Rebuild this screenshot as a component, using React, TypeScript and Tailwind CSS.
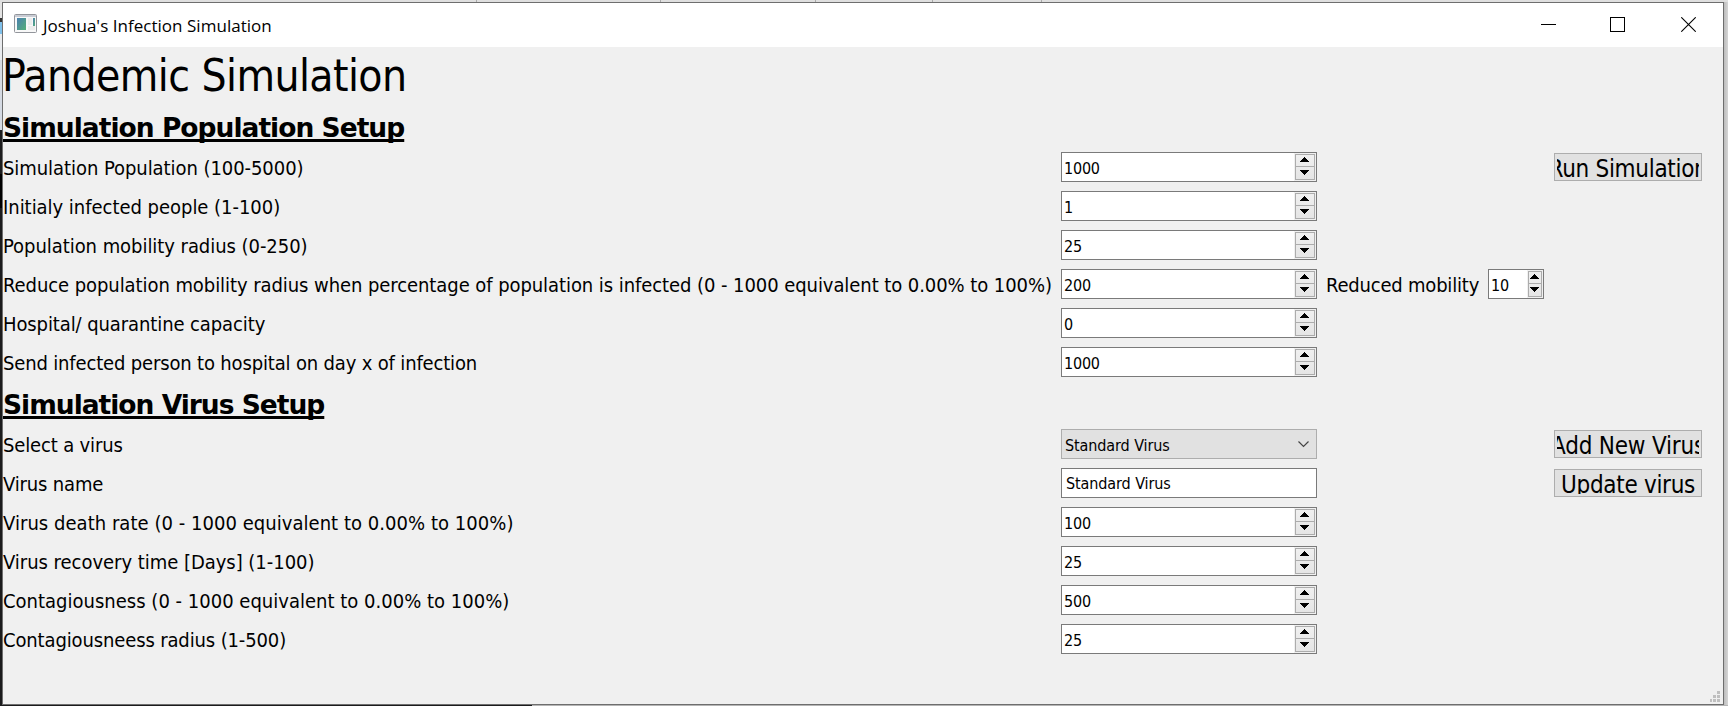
import type { ReactNode } from "react";

const tahoma = "font-['DejaVu_Sans_Condensed','DejaVu_Sans',sans-serif]";

function Arrow({ down = false }: { down?: boolean }) {
  return (
    <svg width="9" height="5" viewBox="0 0 9 5" shapeRendering="crispEdges" className="block shrink-0">
      {down ? (
        <path d="M0 0h9v1H8v1H7v1H6v1H5v1H4V4H3V3H2V2H1V1H0z" fill="#000" />
      ) : (
        <path d="M4 0h1v1h1v1h1v1h1v1h1v1H0V4h1V3h1V2h1V1h1z" fill="#000" />
      )}
    </svg>
  );
}

function SpinBox({ value, small = false }: { value: string; small?: boolean }) {
  return (
    <div
      className={`flex h-[30px] shrink-0 justify-between border border-[#7a7a7a] bg-white ${small ? "w-14" : "w-64"}`}
    >
      <span className="pt-[6px] pl-[2px] text-[16px] leading-[19px] tracking-[-0.2px]">{value}</span>
      <div className={`flex bg-[#f0f0f0] py-px pl-px ${small ? "w-4" : "w-[22px]"}`}>
        <div
          className={`flex h-[26px] flex-col border border-[#acacac] bg-linear-to-b from-[#f0f0f0] to-[#e5e5e5] ${small ? "w-[14px]" : "w-5"}`}
        >
          <div className="flex h-3 items-start justify-center border-b border-[#acacac] pt-[2px] pr-px">
            <Arrow />
          </div>
          <div className="flex flex-1 items-start justify-center pt-[3px] pr-px">
            <Arrow down />
          </div>
        </div>
      </div>
    </div>
  );
}

function Button({ children, className }: { children: ReactNode; className: string }) {
  return (
    <button type="button" className="mt-px ml-auto h-7 w-[148px] shrink-0 border border-[#adadad] bg-[#e1e1e1] p-[2px]">
      <span className="flex h-[22px] w-full items-start justify-center overflow-hidden">
        <span className={`-mt-px shrink-0 whitespace-nowrap text-[24px] leading-[28px] ${className}`}>{children}</span>
      </span>
    </button>
  );
}

function Row({ label, tracking = "", children }: { label: string; tracking?: string; children: ReactNode }) {
  return (
    <div className="flex h-[39px] items-start pr-[21px]">
      <div className="w-[1058px] shrink-0">
        <span className={`block whitespace-nowrap pt-1 text-[20px] leading-6 ${tracking}`}>{label}</span>
      </div>
      {children}
    </div>
  );
}

function SectionTitle({ children, className }: { children: ReactNode; className: string }) {
  return (
    <h2
      className={`whitespace-nowrap font-['DejaVu_Sans',sans-serif] text-[26.5px] leading-[31px] font-bold underline decoration-[3px] underline-offset-[2px] [text-decoration-skip-ink:none] ${className}`}
    >
      {children}
    </h2>
  );
}

function AppIcon() {
  return (
    <svg width="23" height="19" viewBox="0 0 23 19" className="block">
      <defs>
        <linearGradient id="pane" x1="0" y1="0" x2="1" y2="1">
          <stop offset="0" stopColor="#4a7fb0" />
          <stop offset="1" stopColor="#55b078" />
        </linearGradient>
      </defs>
      <rect x="0.5" y="0.5" width="22" height="18" rx="1" fill="#f8f8f8" stroke="#92959b" />
      <rect x="1" y="1" width="21" height="2" fill="#c9ccd4" />
      <rect x="3" y="4" width="9" height="12" fill="url(#pane)" />
      <rect x="14" y="4" width="4" height="7" fill="#ececec" />
      <rect x="14" y="12" width="7" height="4" fill="#ececec" />
      <rect x="19" y="4" width="2" height="8" fill="url(#pane)" />
    </svg>
  );
}

function TitleBar() {
  return (
    <header className="flex h-11 items-start bg-white">
      <div className="pt-[11px] pl-[11px]">
        <AppIcon />
      </div>
      <span className="mt-[11px] ml-[6px] whitespace-nowrap font-['Open_Sans','Noto_Sans',sans-serif] text-[17px] leading-6 tracking-[0.03px]">
        Joshua's Infection Simulation
      </span>
      <div className="mt-[14px] mr-[27px] ml-auto flex">
        <svg width="15" height="15" shapeRendering="crispEdges" className="mr-[54px]">
          <path d="M0 7h15v1H0z" />
        </svg>
        <svg width="15" height="15" shapeRendering="crispEdges" className="mr-14">
          <rect x="0.5" y="0.5" width="14" height="14" fill="none" stroke="#000" />
        </svg>
        <svg width="15" height="15">
          <path d="M0.3 0.3l14.4 14.4M14.7 0.3L0.3 14.7" stroke="#000" strokeWidth="1.1" fill="none" />
        </svg>
      </div>
    </header>
  );
}

function LeftBackdrop() {
  return (
    <div className="flex w-[2px] shrink-0 flex-col bg-[#1b1b1c]">
      <div className="h-[16px] bg-[#e3e3e3]" />
      <div className="h-1 bg-[#333]" />
      <div className="h-3 bg-[#7fc0ea]" />
      <div className="h-[26px] bg-[#e9ebee]" />
      <div className="h-[70px] bg-[#d5dae3]" />
      <div className="h-[44px] bg-[#1c1c1d]" />
      <div className="h-[34px] bg-black" />
    </div>
  );
}

export default function App() {
  return (
    <div className={`flex h-[706px] w-[1728px] flex-col overflow-hidden bg-[#dcdcdc] text-black ${tahoma}`}>
      <div className="flex h-[2px] shrink-0 bg-[#dfdfdf]">
        <div className="w-[477px] border-r border-[#aaa]" />
        <div className="w-[184px] border-r border-[#aaa]" />
        <div className="w-[155px] border-r border-[#aaa]" />
        <div className="w-[117px] border-r border-[#aaa]" />
        <div className="w-[109px] border-r border-[#aaa]" />
      </div>
      <div className="flex h-[703px] shrink-0">
        <LeftBackdrop />
        <main className="flex w-[1722px] shrink-0 flex-col border border-[#6e6e6e] bg-[#f0f0f0]">
          <TitleBar />
          <h1 className="-ml-px h-[65px] whitespace-nowrap pt-[3px] text-[44px] leading-[51px] tracking-[-0.58px]">
            Pandemic Simulation
          </h1>
          <SectionTitle className="h-10 tracking-[-0.98px]">Simulation Population Setup</SectionTitle>
          <Row label="Simulation Population (100-5000)" tracking="tracking-[-0.06px]">
            <SpinBox value="1000" />
            <Button className="tracking-[-0.3px]">Run Simulation</Button>
          </Row>
          <Row label="Initialy infected people (1-100)" tracking="tracking-[-0.03px]">
            <SpinBox value="1" />
          </Row>
          <Row label="Population mobility radius (0-250)" tracking="tracking-[-0.05px]">
            <SpinBox value="25" />
          </Row>
          <Row
            label="Reduce population mobility radius when percentage of population is infected (0 - 1000 equivalent to 0.00% to 100%)"
            tracking="tracking-[-0.07px]"
          >
            <SpinBox value="200" />
            <span className="ml-[9px] w-[162px] whitespace-nowrap pt-1 text-[20px] leading-6 tracking-[-0.2px]">
              Reduced mobility
            </span>
            <SpinBox value="10" small />
          </Row>
          <Row label="Hospital/ quarantine capacity" tracking="tracking-[-0.1px]">
            <SpinBox value="0" />
          </Row>
          <Row label="Send infected person to hospital on day x of infection" tracking="tracking-[-0.16px]">
            <SpinBox value="1000" />
          </Row>
          <SectionTitle className="h-[43px] pt-[3px] tracking-[-1px]">Simulation Virus Setup</SectionTitle>
          <Row label="Select a virus" tracking="tracking-[-0.15px]">
            <div className="flex h-[30px] w-64 shrink-0 justify-between border border-[#adadad] bg-[#e1e1e1]">
              <span className="pt-[6px] pl-[3px] text-[16px] leading-[19px] tracking-[-0.1px]">Standard Virus</span>
              <svg width="11" height="7" viewBox="0 0 11 7" className="mt-[11px] mr-[7px]">
                <path d="M0.5 0.5L5.5 5.5L10.5 0.5" fill="none" stroke="#444" strokeWidth="1.2" />
              </svg>
            </div>
            <Button className="tracking-[-0.2px]">Add New Virus</Button>
          </Row>
          <Row label="Virus name" tracking="tracking-[-0.15px]">
            <div className="h-[30px] w-64 shrink-0 border border-[#7a7a7a] bg-white pt-[5px] pl-1 text-[16px] leading-[19px] tracking-[-0.1px]">
              Standard Virus
            </div>
            <Button className="tracking-[-0.3px]">Update virus</Button>
          </Row>
          <Row label="Virus death rate (0 - 1000 equivalent to 0.00% to 100%)" tracking="tracking-[0.04px]">
            <SpinBox value="100" />
          </Row>
          <Row label="Virus recovery time [Days] (1-100)" tracking="tracking-[-0.03px]">
            <SpinBox value="25" />
          </Row>
          <Row label="Contagiousness (0 - 1000 equivalent to 0.00% to 100%)" tracking="tracking-[0.01px]">
            <SpinBox value="500" />
          </Row>
          <Row label="Contagiousneess radius (1-500)" tracking="tracking-[-0.13px]">
            <SpinBox value="25" />
          </Row>
          <div className="mt-auto flex justify-end pr-[3px] pb-[2px]">
            <svg width="11" height="11" shapeRendering="crispEdges" fill="#bfbfbf">
              <path d="M8 0h3v3H8zM8 4h3v3H8zM4 4h3v3H4zM8 8h3v3H8zM4 8h3v3H4zM1 8h2v3H1z" />
            </svg>
          </div>
        </main>
        <div className="flex-1 bg-linear-to-r from-[#bdbdbd] to-[#d6d6d6]" />
      </div>
      <div className="flex h-px shrink-0 bg-[#b5b5b5]">
        <div className="w-[532px] bg-[#1b1b1c]" />
      </div>
    </div>
  );
}
